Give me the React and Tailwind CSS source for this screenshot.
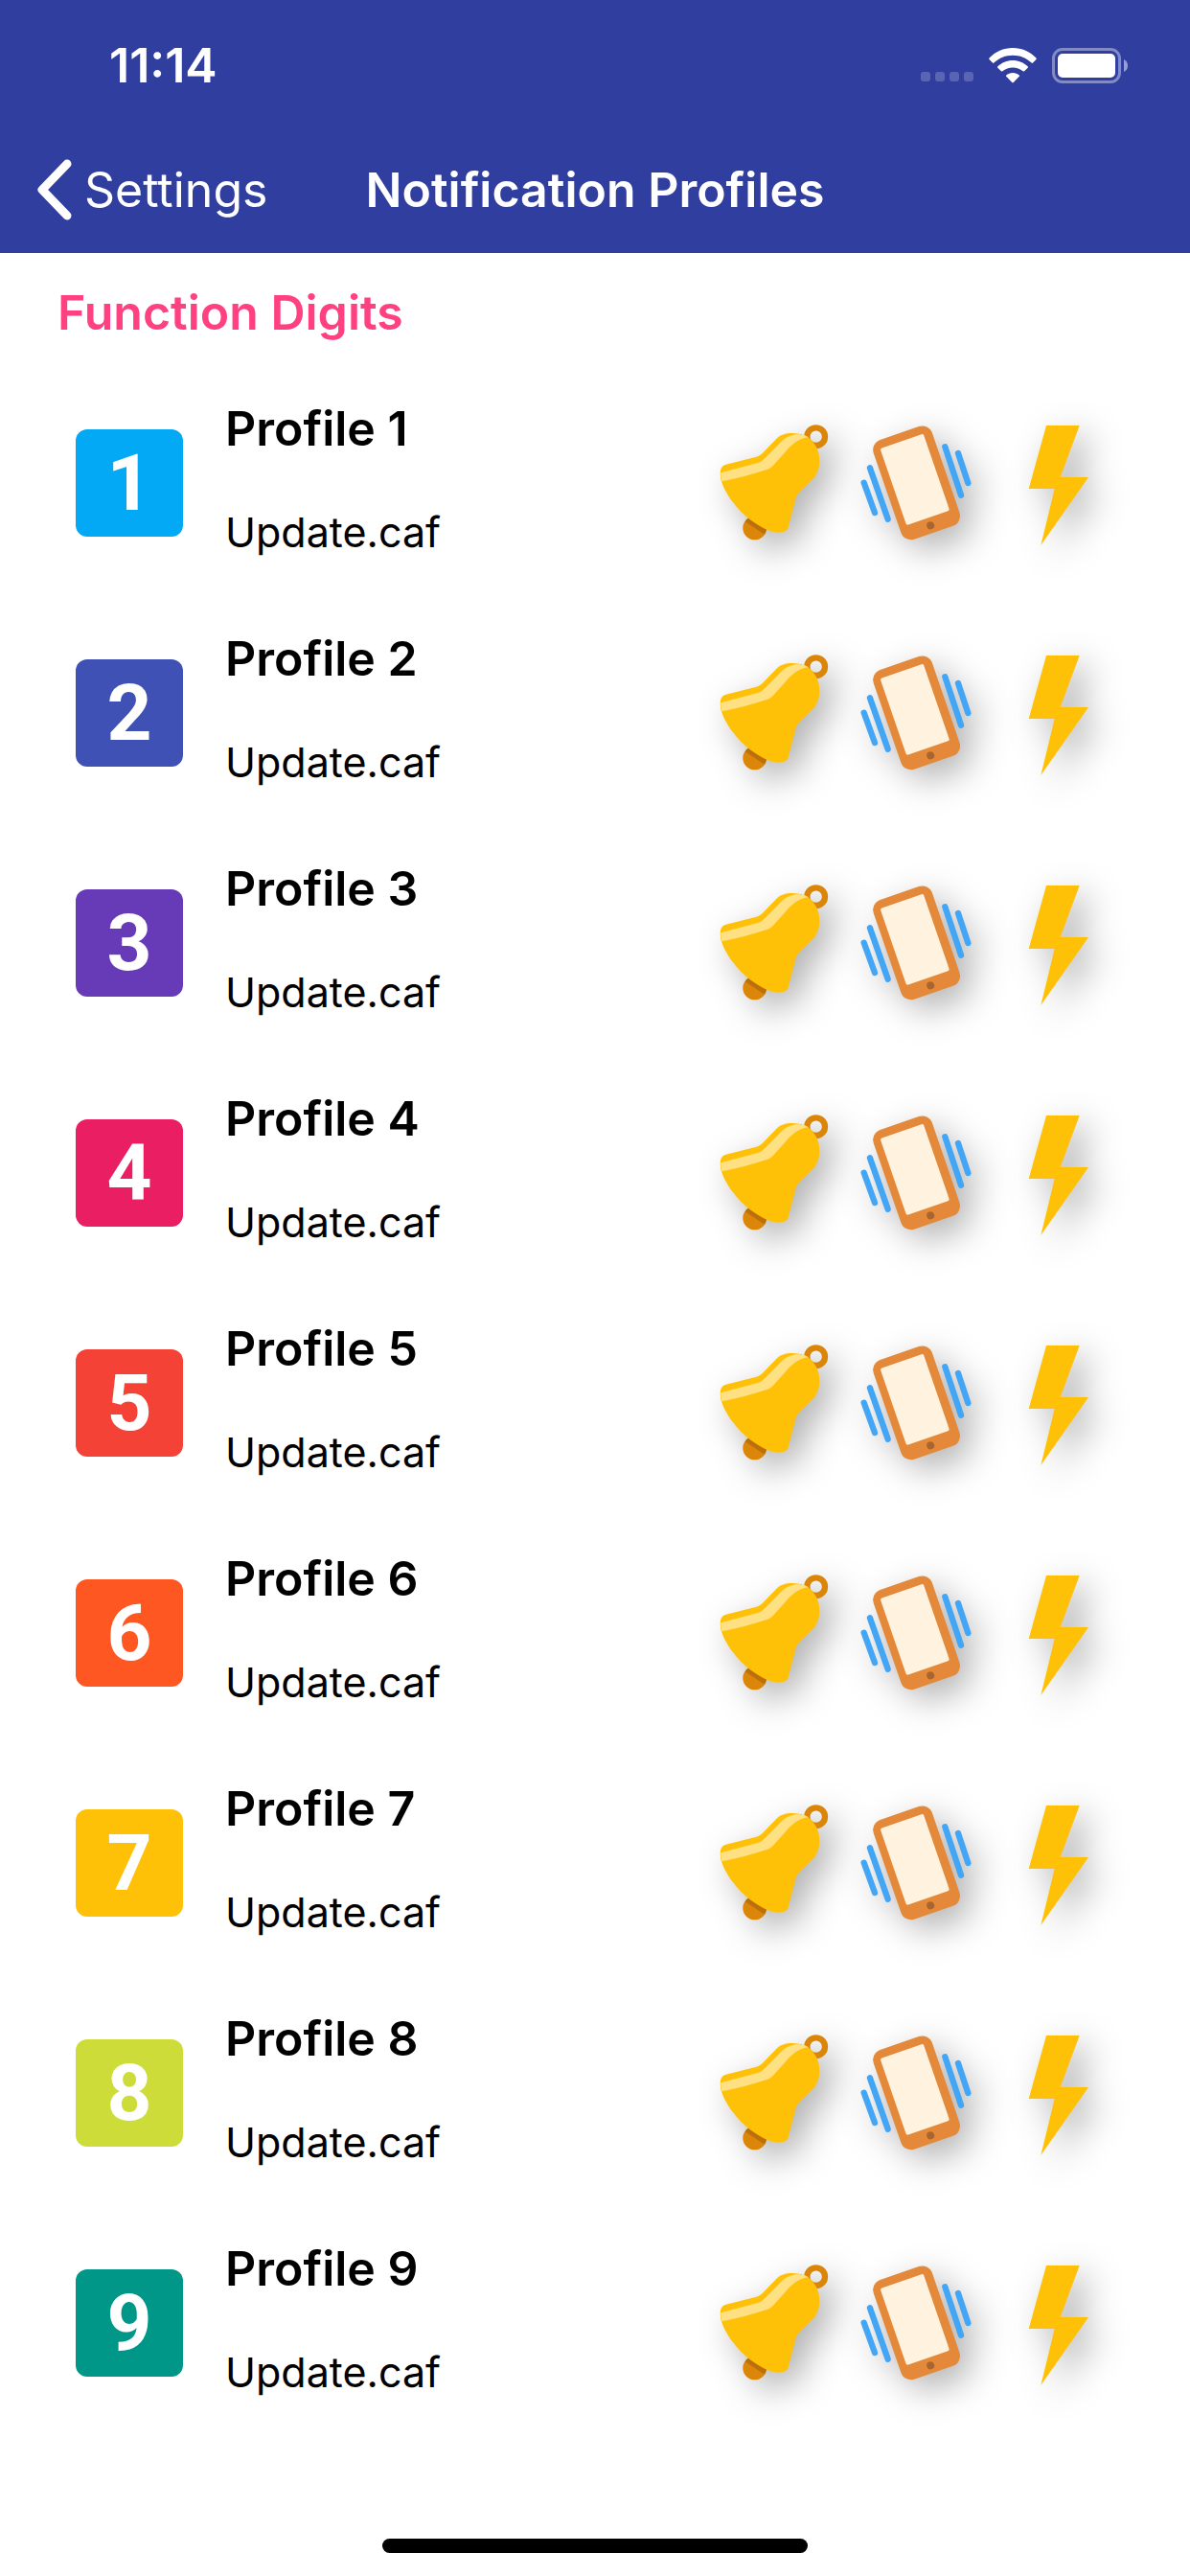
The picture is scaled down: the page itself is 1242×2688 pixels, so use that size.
const profiles = [
  { id: 1, color: "bg-[#03a9f4]" },
  { id: 2, color: "bg-[#3f51b5]" },
  { id: 3, color: "bg-[#673ab7]" },
  { id: 4, color: "bg-[#e91e63]" },
  { id: 5, color: "bg-[#f44336]" },
  { id: 6, color: "bg-[#ff5722]" },
  { id: 7, color: "bg-[#ffc107]" },
  { id: 8, color: "bg-[#cddc39]" },
  { id: 9, color: "bg-[#009688]" },
];

const iconClass = "size-36 drop-shadow-[12px_12px_18px_rgba(0,0,0,0.3)]";

function BellIcon() {
  return (
    <svg viewBox="15 36 432 432" className={iconClass} aria-hidden="true">
      <circle cx="362" cy="107" r="28" fill="none" stroke="#db8509" strokeWidth="19" />
      <circle cx="170" cy="393" r="37" fill="#db8509" />
      <path d="M152 360 L207 396 Q206 405 201 413 L140 373 Q144 365 152 360Z" fill="#bc6f0a" />
      <path
        d="M64 240 C62 225 61 214 65 206 Q70 196 80 194 L172 171 Q184 168 192 161 L237 115 C250 101 266 96 287 96 C320 96 340 107 352 123 C366 140 373 160 373 182 C373 210 364 228 347 245 L315 275 C303 287 299 296 296 310 L276 388 C273 401 264 407 243 407 C215 406 187 389 160 370 C117 338 75 285 64 240Z"
        fill="#ffc107"
      />
      <path
        d="M64 220 L180 189 Q190 186 197 179 L250 126 C273 102 300 96 325 102 L339 109 C308 111 285 133 263 158 L227 198 Q218 208 206 211 C160 226 115 238 68 247 Q63 236 64 220Z"
        fill="#ffe082"
      />
    </svg>
  );
}

function VibrateIcon() {
  return (
    <svg viewBox="9 36 432 432" className={iconClass} aria-hidden="true">
      <g transform="translate(227 252) rotate(-19)">
        <rect x="-97" y="-165" width="194" height="329" rx="33" fill="#e38939" />
        <rect x="-73" y="-139" width="143" height="254" rx="6" fill="#fff3e0" />
        <circle cx="-2" cy="140" r="12" fill="#a6662c" />
      </g>
      <path
        d="M316 139 L366 290 M357 159 L388 252 M81 205 L137 365 M62 251 L96 345"
        stroke="#42a5f5"
        strokeWidth="19"
        strokeLinecap="round"
      />
    </svg>
  );
}

function FlashIcon() {
  return (
    <svg viewBox="-27 36 432 432" className={iconClass} aria-hidden="true">
      <path d="M153 72 H257 L197 234 H285 L136 447 L179 270 H98Z" fill="#ffc107" />
    </svg>
  );
}

function StatusBar() {
  return (
    <div className="flex h-[136px] items-center justify-between pl-[114px] pr-16">
      <span className="text-[50px] font-semibold leading-[60px]">11:14</span>
      <div className="flex items-center gap-4">
        <div className="flex gap-[5px] self-end pb-0.5">
          {[0, 1, 2, 3].map((dot) => (
            <span key={dot} className="size-2.5 rounded-[3px] bg-white/20" />
          ))}
        </div>
        <svg viewBox="0 0 50 37" className="h-[37px] w-[50px]" fill="#fff" aria-hidden="true">
          <path d="M25 0 C34.500 0 43 4 49.500 10.500 Q50 11.200 49.500 12 L46 15.600 Q45.300 16.200 44.600 15.600 C39 10.500 32.500 7.800 25 7.800 C17.500 7.800 11 10.500 5.400 15.600 Q4.700 16.200 4 15.600 L.5 12 Q0 11.200 .5 10.500 C7 4 15.500 0 25 0Z" />
          <path d="M25 13 C31 13 36.500 15.300 40.700 19.300 Q41.300 20 40.700 20.700 L37.100 24.300 Q36.400 24.900 35.700 24.300 C32.700 21.800 29 20.500 25 20.500 C21 20.500 17.300 21.800 14.300 24.300 Q13.600 24.900 12.900 24.300 L9.300 20.700 Q8.700 20 9.300 19.300 C13.500 15.300 19 13 25 13Z" />
          <path d="M25 26 C27.700 26 30 26.900 31.800 28.400 Q32.400 29 31.800 29.700 L25.700 36 Q25 36.700 24.300 36 L18.200 29.700 Q17.600 29 18.200 28.400 C20 26.900 22.300 26 25 26Z" />
        </svg>
        <svg viewBox="0 0 80 37" className="h-[37px] w-20" aria-hidden="true">
          <rect x="1.500" y="1.500" width="69" height="34" rx="9.500" fill="none" stroke="#fff" strokeOpacity="0.4" strokeWidth="3" />
          <rect x="6" y="6" width="60" height="25" rx="5" fill="#fff" />
          <path d="M75 12 Q79 14 79 18.500 Q79 23 75 25Z" fill="#fff" fillOpacity="0.5" />
        </svg>
      </div>
    </div>
  );
}

function NavBar() {
  return (
    <nav className="grid h-32 grid-cols-[1fr_auto_1fr] items-center px-[38px] pb-1 text-[50px] leading-[60px]">
      <a href="#settings" className="flex items-center gap-3">
        <svg viewBox="0 0 38 64" className="h-16 w-[38px]" fill="none" aria-hidden="true">
          <path d="M32 5 L6 32 L32 59" stroke="#fff" strokeWidth="9" strokeLinecap="round" strokeLinejoin="round" />
        </svg>
        Settings
      </a>
      <h1 className="font-semibold">Notification Profiles</h1>
    </nav>
  );
}

function ProfileRow({ id, color }) {
  const name = `Profile ${id}`;
  return (
    <li className="flex h-60 items-center pl-[79px] pr-[66px]">
      <div
        className={`flex size-28 shrink-0 items-center justify-center rounded-xl font-[Roboto,sans-serif] text-[82px] font-bold leading-none text-white ${color}`}
      >
        {id}
      </div>
      <div className="ml-11 flex flex-1 flex-col gap-12 pb-1.5 leading-[60px]">
        <h3 className="text-[50px] font-semibold">{name}</h3>
        <p className="text-[43px]">Update.caf</p>
      </div>
      <div className="flex gap-1">
        <button type="button" aria-label={`${name} sound`}>
          <BellIcon />
        </button>
        <button type="button" aria-label={`${name} vibration`}>
          <VibrateIcon />
        </button>
        <button type="button" aria-label={`${name} flash`}>
          <FlashIcon />
        </button>
      </div>
    </li>
  );
}

export default function App() {
  return (
    <div className="flex min-h-screen flex-col bg-white font-[Inter,sans-serif] text-black">
      <header className="bg-[#303f9f] text-white">
        <StatusBar />
        <NavBar />
      </header>
      <main>
        <h2 className="px-[60px] pb-7 pt-8 text-[50px] font-semibold leading-[60px] text-[#ff4081]">
          Function Digits
        </h2>
        <ul>
          {profiles.map((profile) => (
            <ProfileRow key={profile.id} {...profile} />
          ))}
        </ul>
      </main>
      <footer className="mt-auto flex justify-center pb-6">
        <div className="h-[15px] w-[444px] rounded-full bg-black" />
      </footer>
    </div>
  );
}
